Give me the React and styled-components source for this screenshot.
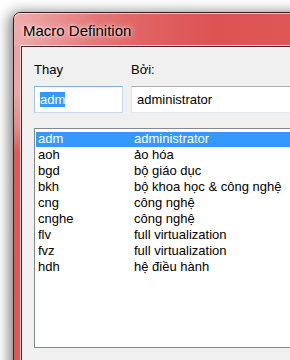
import React from "react";
import styled, { createGlobalStyle } from "styled-components";

const Global = createGlobalStyle`
  html, body { margin: 0; padding: 0; background: #ffffff; overflow: hidden; }
  body { font-family: "Liberation Sans", Arial, "DejaVu Sans", sans-serif; }
`;

const Page = styled.div`
  width: 290px;
  height: 360px;
  overflow: hidden;
  background: #ffffff;
  padding: 12px 0 0 13px;
  box-sizing: border-box;
`;

const Window = styled.div`
  width: 340px;
  height: 420px;
  border: 1px solid #3a1c1c;
  border-radius: 7px 7px 0 0;
  box-shadow: -2px 2px 13px 2px rgba(0, 0, 0, 0.5);
  background: linear-gradient(
    180deg,
    #eaa2a2 0px,
    #eca6a6 80px,
    #e78888 115px,
    #df5959 140px,
    #de5656 100%
  );
  display: flex;
  flex-direction: column;
  overflow: hidden;
`;

const TitleBar = styled.div`
  height: 33px;
  flex: none;
  box-sizing: border-box;
  padding: 1px 0 0 9px;
  display: flex;
  align-items: center;
  font-size: 15px;
  color: #000;
  box-shadow: inset 0 1px 0 rgba(255, 235, 235, 0.7);
  background: linear-gradient(
    90deg,
    #efadad 0px,
    #eb9a9a 30px,
    #e57878 80px,
    #e06262 130px,
    #dd5353 200px,
    #e15959 100%
  );
  border-radius: 6px 6px 0 0;
`;

const TitleText = styled.span`
  text-shadow: 0 0 6px rgba(255, 255, 255, 0.9), 0 0 3px rgba(255, 255, 255, 0.7);
`;

const FrameBody = styled.div`
  flex: 1;
  padding-left: 7px;
  display: flex;
`;

const Client = styled.div`
  flex: 1;
  background: #f0f0f0;
  border-top: 1px solid #4a2424;
  border-left: 1px solid #4a2424;
  box-shadow: -1px -1px 0 rgba(255, 230, 230, 0.85);
  padding: 15px 0 0 12px;
  font-size: 13px;
  color: #000;
`;

const Fields = styled.div`
  display: grid;
  grid-template-columns: 89px 1fr;
  column-gap: 8px;
  row-gap: 9px;
`;

const Label = styled.div`
  line-height: 15px;
  height: 15px;
`;

const TextBox = styled.div`
  height: 27px;
  box-sizing: border-box;
  background: #fff;
  border: 1px solid ${(p) => (p.$focused ? "#c5daed" : "#e3e9ef")};
  border-top-color: ${(p) => (p.$focused ? "#7eb4ea" : "#abadb3")};
  border-left-color: ${(p) => (p.$focused ? "#a9c8e8" : "#e2e3ea")};
  padding: 0 0 0 5px;
  display: flex;
  align-items: center;
  line-height: 15px;
  white-space: nowrap;
`;

const Selected = styled.span`
  background: #3399ff;
  color: #fff;
  line-height: 15px;
`;

const ListBox = styled.div`
  margin-top: 15px;
  height: 220px;
  box-sizing: border-box;
  background: #fff;
  border: 1px solid #828790;
  padding: 2px 0 0 1px;
`;

const Row = styled.div`
  display: flex;
  height: 16px;
  line-height: 15px;
  white-space: nowrap;
  background: ${(p) => (p.$selected ? "#3399ff" : "transparent")};
  color: ${(p) => (p.$selected ? "#fff" : "#000")};
  box-shadow: ${(p) => (p.$selected ? "inset 0 1px 0 #fff" : "none")};
`;

const KeyCell = styled.div`
  width: 98px;
  box-sizing: border-box;
  padding-left: 2px;
  flex: none;
`;

const ValueCell = styled.div`
  flex: 1;
`;

const macros = [
  ["adm", "administrator"],
  ["aoh", "ảo hóa"],
  ["bgd", "bộ giáo dục"],
  ["bkh", "bộ khoa học & công nghệ"],
  ["cng", "công nghệ"],
  ["cnghe", "công nghệ"],
  ["flv", "full virtualization"],
  ["fvz", "full virtualization"],
  ["hdh", "hệ điều hành"],
];

export default function App() {
  return (
    <>
      <Global />
      <Page>
        <Window>
          <TitleBar>
            <TitleText>Macro Definition</TitleText>
          </TitleBar>
          <FrameBody>
            <Client>
              <Fields>
                <Label>Thay</Label>
                <Label>Bởi:</Label>
                <TextBox $focused>
                  <Selected>adm</Selected>
                </TextBox>
                <TextBox>administrator</TextBox>
              </Fields>
              <ListBox>
                {macros.map(([k, v], i) => (
                  <Row key={k} $selected={i === 0}>
                    <KeyCell>{k}</KeyCell>
                    <ValueCell>{v}</ValueCell>
                  </Row>
                ))}
              </ListBox>
            </Client>
          </FrameBody>
        </Window>
      </Page>
    </>
  );
}
